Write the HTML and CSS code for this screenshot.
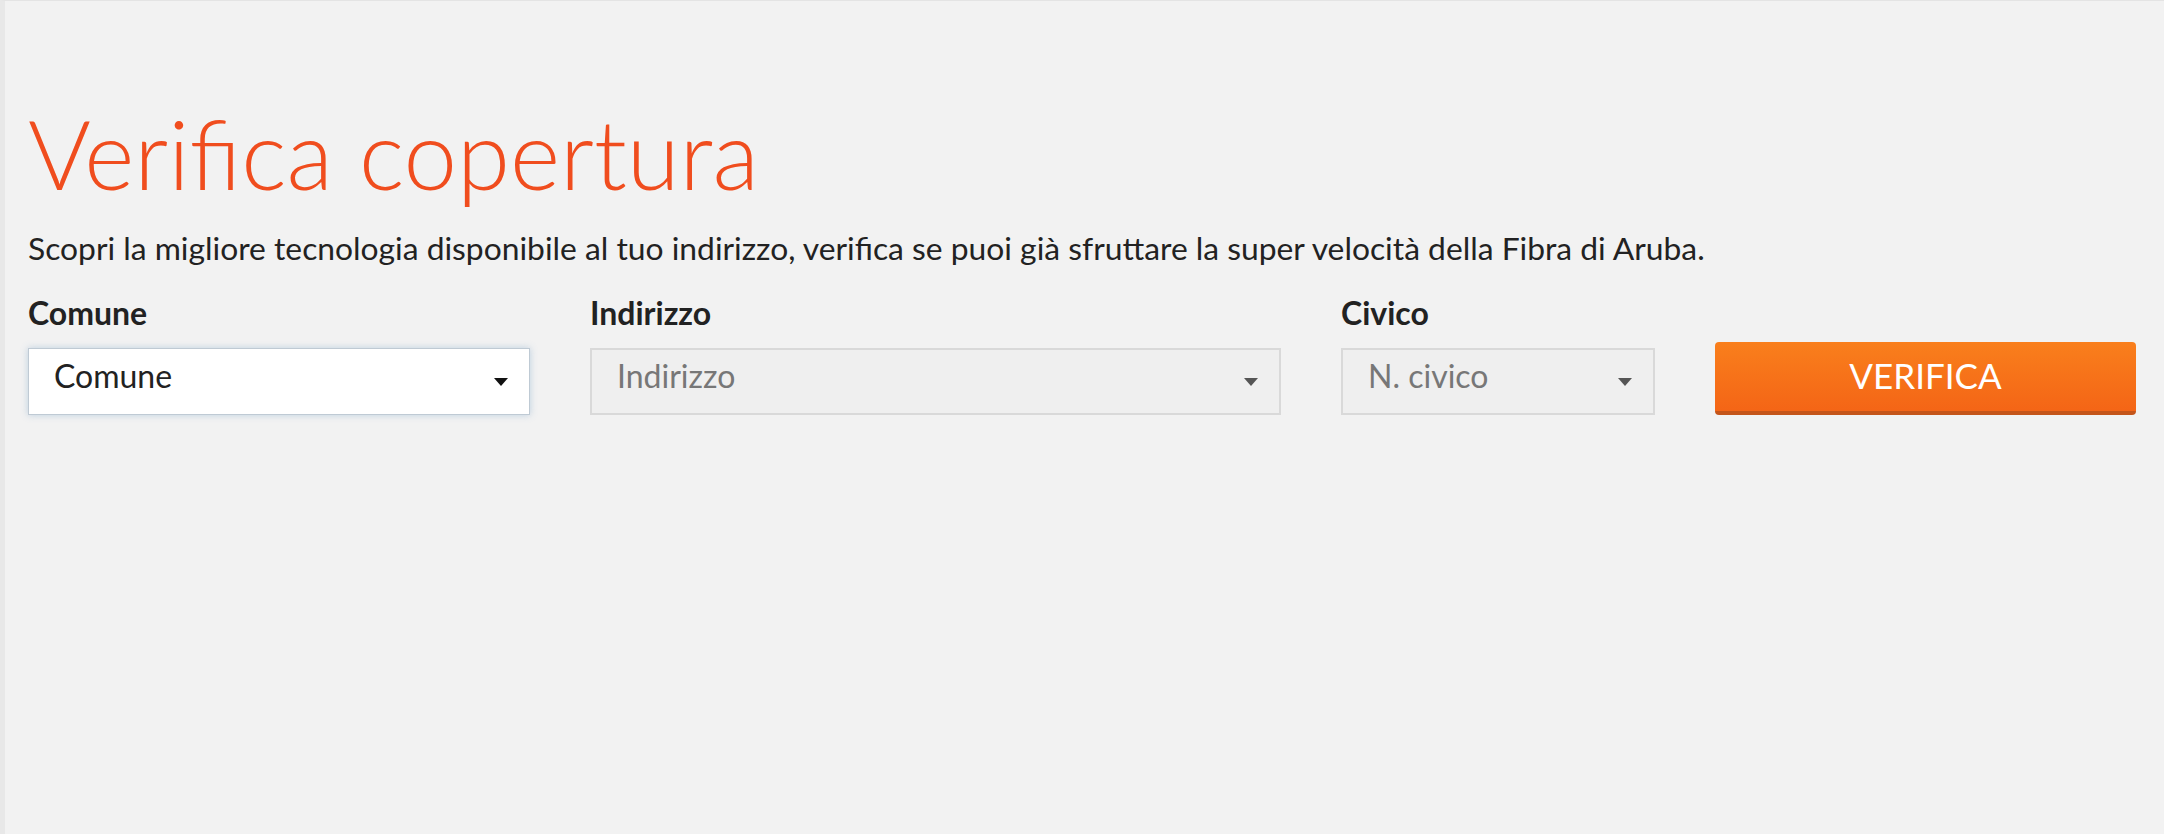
FILE: index.html
```html
<!DOCTYPE html>
<html lang="it">
<head>
  <meta charset="UTF-8" />
  <meta name="viewport" content="width=device-width, initial-scale=1" />
  <title>Verifica copertura</title>
  <link rel="stylesheet" href="styles.css">
</head>
<body>

  <div class="coverage">
    <h1>Verifica copertura</h1>
    <p class="intro">Scopri la migliore tecnologia disponibile al tuo indirizzo, verifica se puoi già sfruttare la super velocità della Fibra di Aruba.</p>

    <form class="coverage-form">
      <div class="field">
        <label>Comune</label>
        <div class="select select-active">Comune</div>
      </div>
      <div class="field">
        <label>Indirizzo</label>
        <div class="select select-disabled">Indirizzo</div>
      </div>
      <div class="field">
        <label>Civico</label>
        <div class="select select-disabled">N. civico</div>
      </div>
      <div class="field field-btn">
        <button type="button" class="btn-verifica">Verifica</button>
      </div>
    </form>
  </div>

</body>
</html>
```

FILE: styles.css
```css
body {
  margin: 0;
  background-color: #f2f2f2;
  font-family: Lato, "Open Sans", sans-serif;
  color: #222;
  min-height: 834px;
  border-left: 5px solid #e8e8e8;
  border-top: 1px solid #e4e4e4;
  box-sizing: border-box;
}
.coverage {
  padding: 94px 28px 0 23px;
}
h1 {
  margin: 0;
  font-size: 96px;
  font-weight: 300;
  color: #f04d1e;
  line-height: 1.2;
}
.intro {
  margin: 19px 0 0;
  font-size: 31.8px;
  line-height: 1.2;
  color: #222;
}
.coverage-form {
  display: grid;
  grid-template-columns: 502px 691px 314px 1fr;
  column-gap: 60px;
  align-items: end;
  margin-top: 27px;
}
.field label {
  display: block;
  font-size: 32px;
  font-weight: 700;
  line-height: 1.2;
  margin-bottom: 15px;
  color: #222;
}
.select {
  position: relative;
  height: 67px;
  box-sizing: border-box;
  padding: 0 50px 12px 25px;
  display: flex;
  align-items: center;
  font-size: 32px;
}
.select::after {
  content: "";
  position: absolute;
  right: 21px;
  top: 29px;
  border-left: 7.5px solid transparent;
  border-right: 7.5px solid transparent;
  border-top: 8px solid #111;
}
.select-active {
  background: #fff;
  border: 1px solid #bfcad4;
  box-shadow: 0 0 7px rgba(90, 140, 190, 0.35);
  color: #222;
}
.select-disabled {
  background: #efefef;
  border: 2px solid #d9d9d9;
  color: #777;
}
.select-disabled::after {
  border-top-color: #555;
  top: 28px;
}
.btn-verifica {
  display: block;
  width: 100%;
  height: 73px;
  border: none;
  border-bottom: 4px solid #c4551a;
  border-radius: 4px;
  background: linear-gradient(#f97f1c, #f46516);
  color: #fff;
  font-family: Lato, sans-serif;
  font-size: 35px;
  text-transform: uppercase;
  cursor: pointer;
  padding: 0 0 2px;
}
```
